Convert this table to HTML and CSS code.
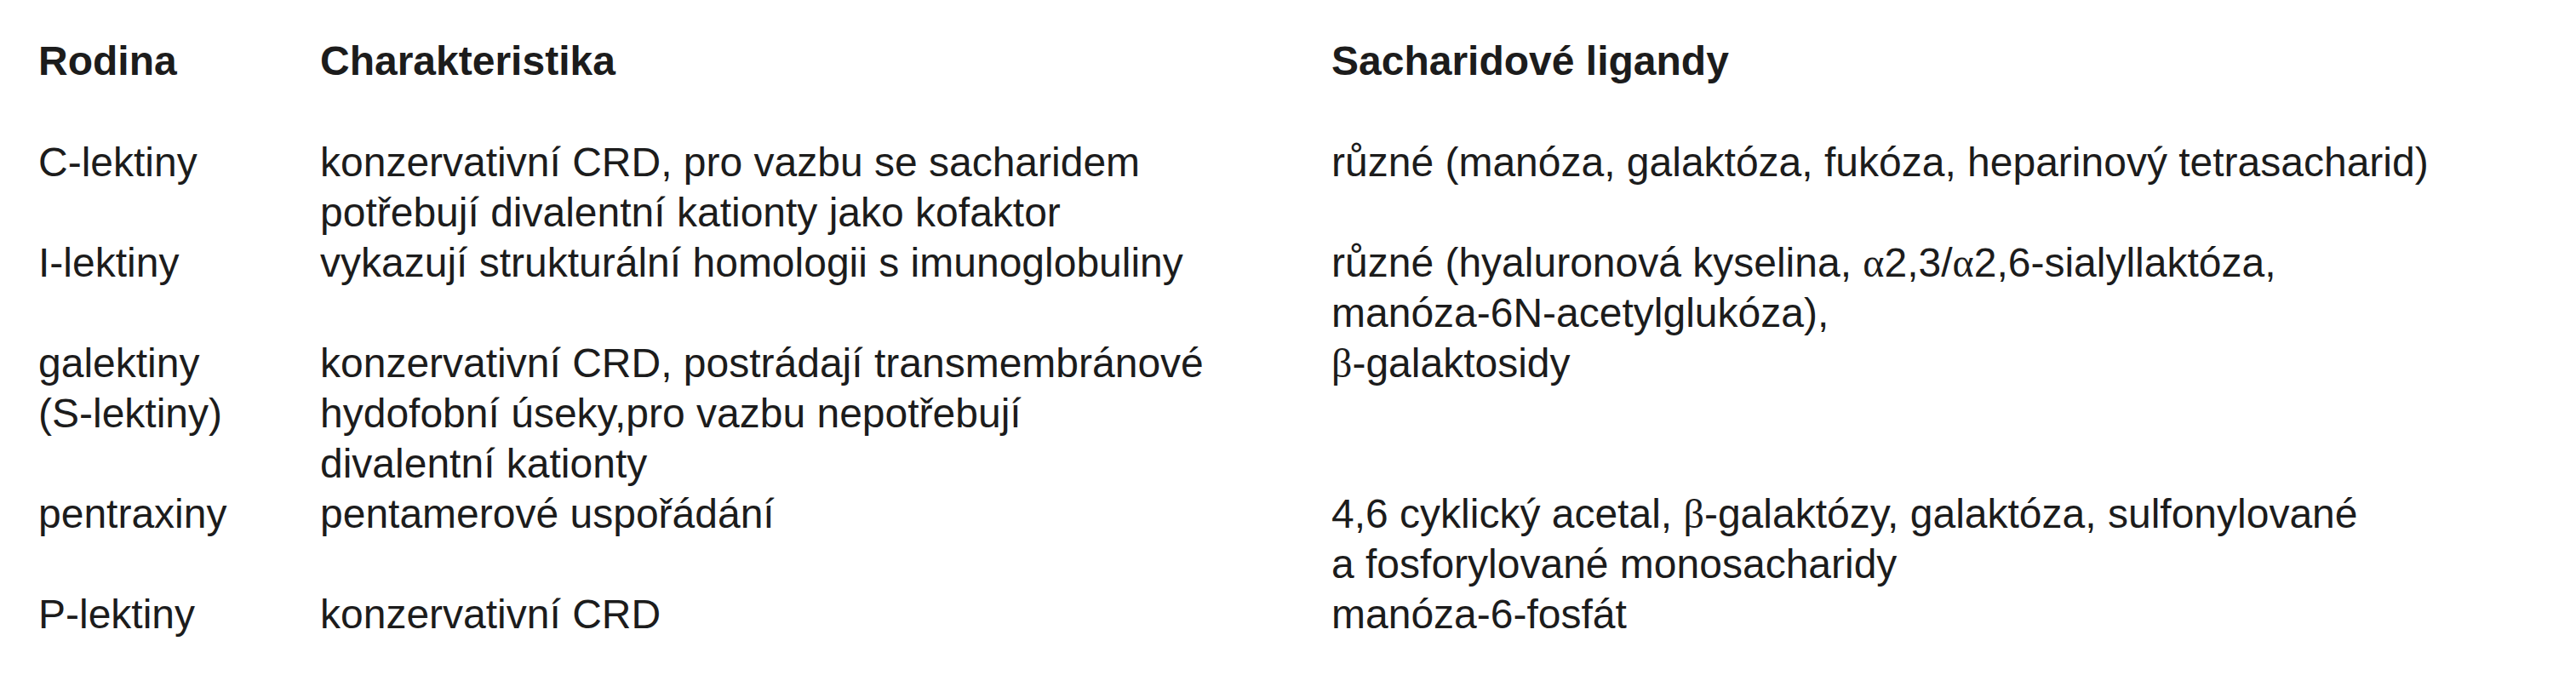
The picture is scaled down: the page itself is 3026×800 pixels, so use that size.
FILE: index.html
```html
<!DOCTYPE html>
<html lang="cs">
<head>
<meta charset="utf-8">
<title>Lektiny</title>
<link rel="stylesheet" href="styles.css">
</head>
<body>
<div class="table">
  <div class="cell head">Rodina</div>
  <div class="cell head">Charakteristika</div>
  <div class="cell head">Sacharidové ligandy</div>

  <div class="cell">C-lektiny</div>
  <div class="cell">konzervativní CRD, pro vazbu se sacharidem<br>potřebují divalentní kationty jako kofaktor</div>
  <div class="cell">různé (manóza, galaktóza, fukóza, heparinový tetrasacharid)</div>

  <div class="cell">I-lektiny</div>
  <div class="cell">vykazují strukturální homologii s imunoglobuliny</div>
  <div class="cell">různé (hyaluronová kyselina, <span class="greek">α</span>2,3/<span class="greek">α</span>2,6-sialyllaktóza,<br>manóza-6N-acetylglukóza),</div>

  <div class="cell">galektiny<br>(S-lektiny)</div>
  <div class="cell">konzervativní CRD, postrádají transmembránové<br>hydofobní úseky,pro vazbu nepotřebují<br>divalentní kationty</div>
  <div class="cell"><span class="greek">β</span>-galaktosidy</div>

  <div class="cell">pentraxiny</div>
  <div class="cell">pentamerové uspořádání</div>
  <div class="cell">4,6 cyklický acetal, <span class="greek">β</span>-galaktózy, galaktóza, sulfonylované<br>a fosforylované monosacharidy</div>

  <div class="cell">P-lektiny</div>
  <div class="cell">konzervativní CRD</div>
  <div class="cell">manóza-6-fosfát</div>
</div>
</body>
</html>
```
FILE: styles.css
```css
html, body {
  margin: 0;
  padding: 0;
  background: #ffffff;
}

body {
  font-family: "Liberation Sans", Arial, sans-serif;
  font-size: 48px;
  line-height: 59px;
  color: #1c1c1c;
}

.table {
  display: grid;
  grid-template-columns: 331px 1188px 1fr;
  padding: 42px 0 0 45px;
}

.cell {
  white-space: nowrap;
}

.head {
  font-weight: bold;
  padding-bottom: 60px;
}

.greek {
  font-family: "Liberation Serif", "Times New Roman", serif;
}
```
